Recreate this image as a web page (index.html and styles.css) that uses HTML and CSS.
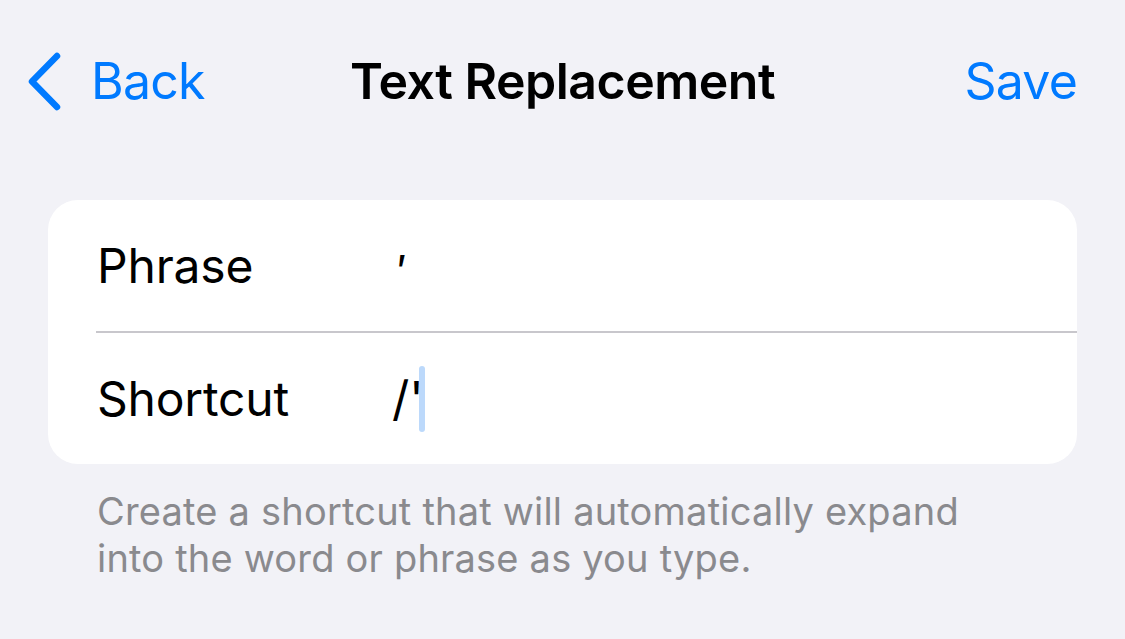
FILE: index.html
```html
<!DOCTYPE html>
<html>
<head>
<meta charset="utf-8">
<link rel="stylesheet" href="styles.css">
</head>
<body>
<div class="screen">
  <header class="nav">
    <div class="nav-left">
      <svg class="chev" width="40" height="60" viewBox="0 0 40 60">
        <path d="M31 4 L6 29.5 L31 55" fill="none" stroke="#007aff" stroke-width="6.5" stroke-linecap="round" stroke-linejoin="round"/>
      </svg>
      <span class="nav-btn">Back</span>
    </div>
    <div class="nav-title">Text Replacement</div>
    <div class="nav-right"><span class="nav-btn">Save</span></div>
  </header>
  <section class="card">
    <div class="row">
      <div class="label">Phrase</div>
      <div class="value phrase">′</div>
    </div>
    <div class="sep"></div>
    <div class="row">
      <div class="label">Shortcut</div>
      <div class="value">/'<span class="cursor"></span></div>
    </div>
  </section>
  <p class="footer">Create a shortcut that will automatically expand<br>into the word or phrase as you type.</p>
</div>
</body>
</html>
```
FILE: styles.css
```css
html, body {
  margin: 0;
  padding: 0;
  background: #f2f2f7;
}
.screen {
  width: 1125px;
  height: 639px;
  overflow: hidden;
  font-family: Inter, "Noto Sans", sans-serif;
  color: #000;
}
.nav {
  display: grid;
  grid-template-columns: 1fr auto 1fr;
  align-items: center;
  height: 100px;
  padding: 31px 48px 0 48px;
}
.nav-left {
  display: flex;
  align-items: center;
  gap: 25px;
  margin-left: -22px;
}
.chev { display: block; margin-top: 2px; }
.nav-btn {
  color: #007aff;
  font-size: 50px;
  letter-spacing: -0.8px;
}
.nav-right {
  display: flex;
  justify-content: flex-end;
}
.nav-title {
  font-size: 50px;
  font-weight: 600;
  letter-spacing: -0.5px;
}
.card {
  margin: 69px 48px 0 48px;
  background: #fff;
  border-radius: 30px;
  overflow: hidden;
}
.row {
  display: flex;
  align-items: center;
  height: 131px;
  padding-left: 49px;
}
.sep {
  height: 1.5px;
  background: #c8c7cc;
  margin-left: 48px;
}
.label {
  width: 295px;
  font-size: 48px;
  letter-spacing: -0.2px;
}
.value {
  font-size: 48px;
  display: flex;
  align-items: center;
}
.value.phrase {
  align-self: flex-start;
  padding-top: 44px;
  padding-left: 5px;
  font-size: 44px;
}
.cursor {
  display: block;
  width: 6px;
  height: 66px;
  border-radius: 3px;
  background: #bcd9fb;
  margin-left: -5px;
  margin-top: 2px;
}
.footer {
  margin: 24px 0 0 97px;
  font-size: 38px;
  line-height: 47px;
  color: #8a8a8e;
  letter-spacing: 0.2px;
}
```
